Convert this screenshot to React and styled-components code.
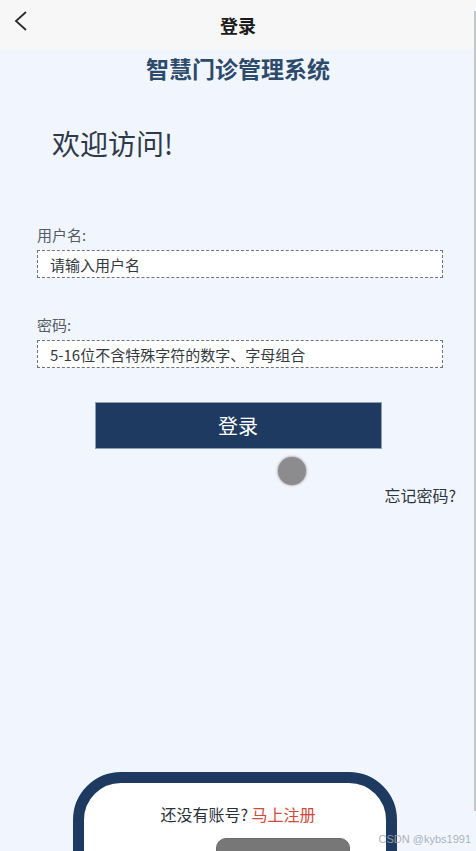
import React from "react";
import styled, { createGlobalStyle } from "styled-components";

const Global = createGlobalStyle`
  html, body { margin: 0; padding: 0; }
  body { font-family: "Noto Sans CJK SC", "Noto Sans", sans-serif; background: #f1f6fe; }
`;

const Page = styled.div`
  position: relative;
  width: 476px;
  height: 851px;
  overflow: hidden;
  display: flex;
  flex-direction: column;
  background: #f1f6fe;
`;

const Header = styled.header`
  height: 50px;
  flex: none;
  background: #f7f7f7;
  display: grid;
  grid-template-columns: 60px 1fr 60px;
  align-items: center;
`;

const Back = styled.button`
  border: 0;
  background: none;
  padding: 10px 0 0 12px;
  height: 50px;
  display: flex;
  align-items: flex-start;
`;

const HeaderTitle = styled.h1`
  margin: 0;
  text-align: center;
  font-size: 18px;
  font-weight: 700;
  color: #1a1a1a;
  line-height: 50px;
`;

const Main = styled.main`
  position: relative;
  flex: 1;
  display: flex;
  flex-direction: column;
`;

const SystemTitle = styled.h2`
  margin: 3px 0 0;
  text-align: center;
  font-size: 23px;
  line-height: 30px;
  font-weight: 700;
  color: #2d4a6b;
`;

const Welcome = styled.div`
  margin-top: 41px;
  padding-left: 52px;
  font-size: 28px;
  line-height: 38px;
  color: #2f3a48;
`;

const Form = styled.form`
  position: relative;
  margin-top: 63px;
  padding: 0 33px 0 37px;
  display: flex;
  flex-direction: column;
`;

const Label = styled.label`
  font-size: 15px;
  line-height: 20px;
  color: #555b63;
  margin-top: ${(p) => p.$gap || 0}px;
`;

const Input = styled.input`
  margin-top: 5px;
  box-sizing: border-box;
  width: 406px;
  height: 28px;
  border: 1px dashed #6f747a;
  background: #fff;
  padding: 0 12px;
  font-family: "Noto Sans CJK SC", sans-serif;
  font-size: 15px;
  color: #333;
  outline: none;
  &::placeholder { color: #33393f; }
`;

const Submit = styled.button`
  align-self: center;
  margin: 34px 0 0 -4px;
  width: 287px;
  height: 47px;
  border: 1px solid #8aa0b8;
  background: #1e3a60;
  color: #fff;
  font-family: "Noto Sans CJK SC", sans-serif;
  font-size: 20px;
`;

const Touch = styled.div`
  position: absolute;
  left: 278px;
  top: 232px;
  width: 28px;
  height: 28px;
  border-radius: 50%;
  background: #8c8c8e;
  box-shadow: 0 0 2px 1px rgba(140, 140, 142, 0.6);
`;

const Forgot = styled.a`
  align-self: flex-end;
  margin: 35px -13px 0 0;
  font-size: 16px;
  line-height: 22px;
  color: #2f3540;
`;

const Card = styled.section`
  margin: 266px 0 0 73px;
  width: 324px;
  height: 200px;
  box-sizing: border-box;
  border: 11px solid #1f3a60;
  border-radius: 48px;
  background: #fff;
  display: flex;
  flex-direction: column;
  align-items: flex-start;
`;

const Prompt = styled.p`
  margin: 20px 0 0;
  align-self: center;
  padding-left: 6px;
  font-size: 16px;
  line-height: 22px;
  color: #2a2f38;
`;

const Register = styled.a`
  color: #d0493b;
`;

const GrayButton = styled.button`
  margin: 13px 0 0 132px;
  width: 134px;
  height: 40px;
  border: 1px solid #6a6a6a;
  border-radius: 10px;
  background: #777;
`;

const Watermark = styled.div`
  position: absolute;
  right: 5px;
  bottom: 6px;
  font-family: "Liberation Sans", Arial, sans-serif;
  font-size: 11px;
  color: rgba(160, 168, 178, 0.9);
`;

const Scrollbar = styled.div`
  position: absolute;
  right: 0;
  top: 11px;
  width: 2px;
  height: 800px;
  background: #c4c6c9;
`;

export default function App() {
  return (
    <>
      <Global />
      <Page>
        <Header>
          <Back aria-label="返回">
            <svg width="16" height="22" viewBox="0 0 16 22">
              <polyline points="14,2 4,11 14,20" fill="none" stroke="#2a2a2a" strokeWidth="1.8" />
            </svg>
          </Back>
          <HeaderTitle>登录</HeaderTitle>
          <span />
        </Header>
        <Main>
          <SystemTitle>智慧门诊管理系统</SystemTitle>
          <Welcome>欢迎访问!</Welcome>
          <Form onSubmit={(e) => e.preventDefault()}>
            <Label>用户名:</Label>
            <Input placeholder="请输入用户名" />
            <Label $gap={37}>密码:</Label>
            <Input placeholder="5-16位不含特殊字符的数字、字母组合" />
            <Submit type="submit">登录</Submit>
            <Touch />
            <Forgot>忘记密码?</Forgot>
          </Form>
          <Card>
            <Prompt>
              还没有账号? <Register>马上注册</Register>
            </Prompt>
            <GrayButton />
          </Card>
        </Main>
        <Scrollbar />
        <Watermark>CSDN @kybs1991</Watermark>
      </Page>
    </>
  );
}
